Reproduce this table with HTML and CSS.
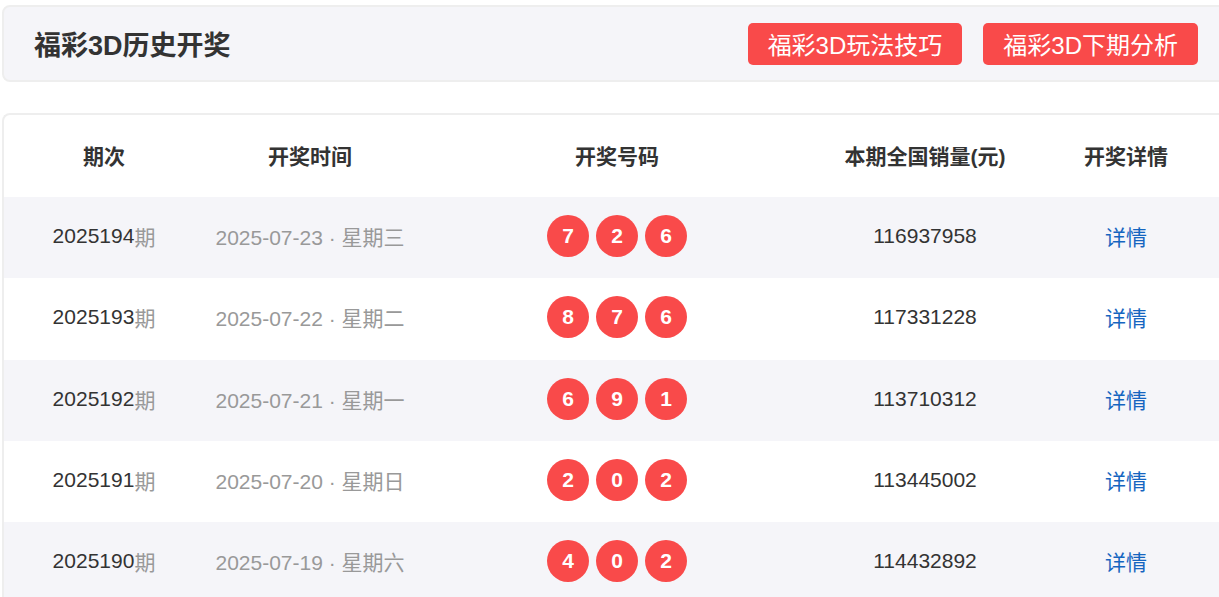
FILE: index.html
```html
<!DOCTYPE html>
<html lang="zh-CN">
<head>
<meta charset="utf-8">
<title>福彩3D历史开奖</title>
<link rel="stylesheet" href="styles.css">
</head>
<body>
<div class="page">
  <header class="topbar">
    <h1 class="title">福彩3D历史开奖</h1>
    <nav class="actions">
      <a class="btn" href="#">福彩3D玩法技巧</a>
      <a class="btn" href="#">福彩3D下期分析</a>
    </nav>
  </header>

  <section class="card">
    <div class="row head">
      <div class="cell">期次</div>
      <div class="cell">开奖时间</div>
      <div class="cell">开奖号码</div>
      <div class="cell">本期全国销量(元)</div>
      <div class="cell">开奖详情</div>
    </div>

    <div class="row alt">
      <div class="cell">2025194<span class="muted">期</span></div>
      <div class="cell muted">2025-07-23 · 星期三</div>
      <div class="cell balls"><span class="ball">7</span><span class="ball">2</span><span class="ball">6</span></div>
      <div class="cell">116937958</div>
      <div class="cell"><a class="link" href="#">详情</a></div>
    </div>

    <div class="row">
      <div class="cell">2025193<span class="muted">期</span></div>
      <div class="cell muted">2025-07-22 · 星期二</div>
      <div class="cell balls"><span class="ball">8</span><span class="ball">7</span><span class="ball">6</span></div>
      <div class="cell">117331228</div>
      <div class="cell"><a class="link" href="#">详情</a></div>
    </div>

    <div class="row alt">
      <div class="cell">2025192<span class="muted">期</span></div>
      <div class="cell muted">2025-07-21 · 星期一</div>
      <div class="cell balls"><span class="ball">6</span><span class="ball">9</span><span class="ball">1</span></div>
      <div class="cell">113710312</div>
      <div class="cell"><a class="link" href="#">详情</a></div>
    </div>

    <div class="row">
      <div class="cell">2025191<span class="muted">期</span></div>
      <div class="cell muted">2025-07-20 · 星期日</div>
      <div class="cell balls"><span class="ball">2</span><span class="ball">0</span><span class="ball">2</span></div>
      <div class="cell">113445002</div>
      <div class="cell"><a class="link" href="#">详情</a></div>
    </div>

    <div class="row alt">
      <div class="cell">2025190<span class="muted">期</span></div>
      <div class="cell muted">2025-07-19 · 星期六</div>
      <div class="cell balls"><span class="ball">4</span><span class="ball">0</span><span class="ball">2</span></div>
      <div class="cell">114432892</div>
      <div class="cell"><a class="link" href="#">详情</a></div>
    </div>
  </section>
</div>
</body>
</html>
```

FILE: styles.css
```css
html, body {
  margin: 0;
  padding: 0;
  overflow: hidden;
  background: #ffffff;
}

body {
  font-family: "Liberation Sans", Arial, "Noto Sans CJK SC", sans-serif;
  color: #333333;
}

.page {
  width: 1228px;
  margin-left: 2px;
  padding-top: 5px;
}

.topbar {
  box-sizing: border-box;
  height: 77px;
  border: 2px solid #eeeeee;
  border-radius: 8px;
  background: #f5f5f9;
  padding: 0 30px;
  display: flex;
  align-items: center;
  justify-content: space-between;
}

.title {
  margin: 0;
  font-size: 27px;
  font-weight: bold;
  color: #333333;
}

.actions {
  display: flex;
  gap: 21px;
}

.btn {
  display: inline-flex;
  align-items: center;
  justify-content: center;
  height: 42px;
  padding: 0 20px;
  border-radius: 5px;
  background: #f94a4a;
  color: #ffffff;
  font-size: 24px;
  text-decoration: none;
}

.card {
  margin-top: 31px;
  border: 2px solid #eeeeee;
  border-right: none;
  border-bottom: none;
  border-radius: 8px 0 0 0;
  background: #ffffff;
}

.row {
  display: grid;
  grid-template-columns: 200px 212px 402px 214px 188px;
  height: 81.3px;
  font-size: 21px;
}

.row.head {
  height: 82px;
  font-weight: bold;
}

.row.alt {
  background: #f5f5f9;
}

.cell {
  display: flex;
  align-items: center;
  justify-content: center;
  white-space: nowrap;
  padding-bottom: 3px;
}

.muted {
  color: #999999;
}

.balls {
  gap: 7px;
}

.ball {
  display: inline-flex;
  align-items: center;
  justify-content: center;
  width: 42px;
  height: 42px;
  border-radius: 50%;
  background: #f94a4a;
  color: #ffffff;
  font-weight: bold;
  font-size: 21px;
}

.link {
  color: #1565c0;
  text-decoration: none;
}
```
